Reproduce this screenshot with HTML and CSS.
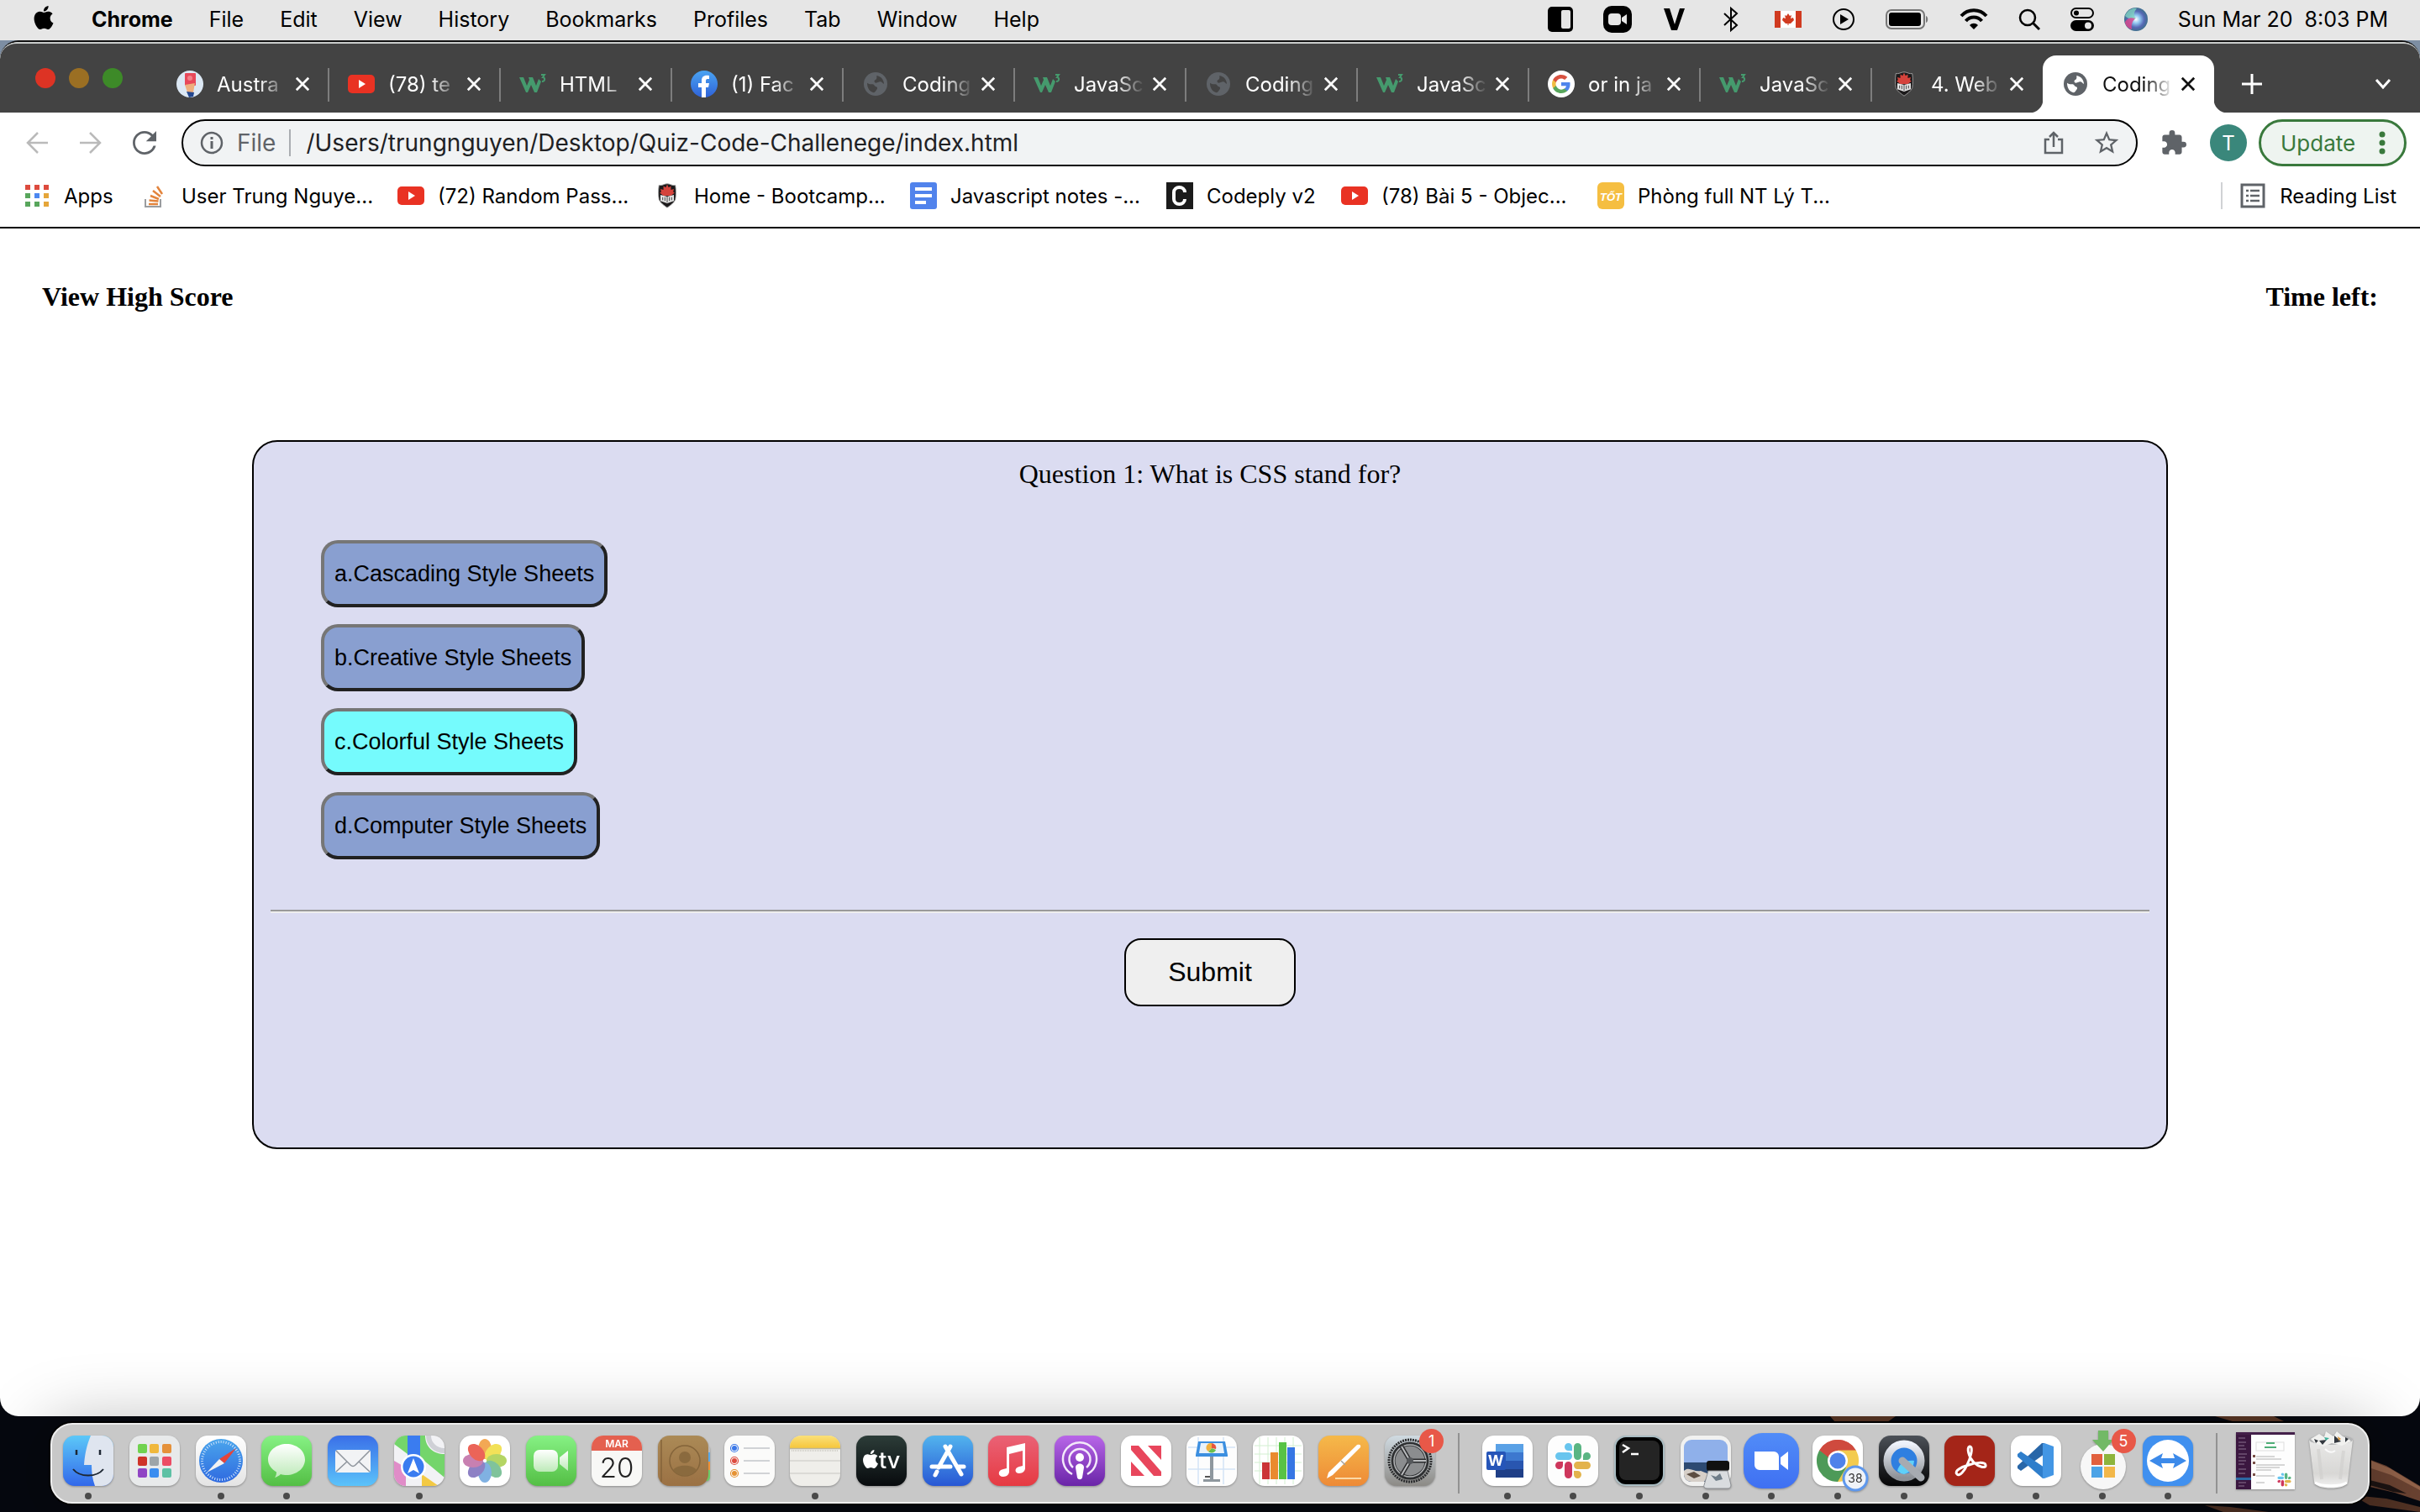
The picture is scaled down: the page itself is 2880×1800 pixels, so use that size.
FILE: index.html
```html
<!DOCTYPE html>
<html lang="en">
<head>
<meta charset="utf-8">
<title>Coding Quiz</title>
<link rel="stylesheet" href="styles.css">
</head>
<body>
<svg class="defs" aria-hidden="true">
  <defs>
    <linearGradient id="gBlue" x1="0" y1="0" x2="0" y2="1"><stop offset="0" stop-color="#3a6fe8"/><stop offset="1" stop-color="#5bc3fa"/></linearGradient>
    <linearGradient id="gFinder" x1="0" y1="0" x2="0" y2="1"><stop offset="0" stop-color="#5cc8f8"/><stop offset="1" stop-color="#3268ea"/></linearGradient>
    <linearGradient id="gSafari" x1="0" y1="0" x2="0" y2="1"><stop offset="0" stop-color="#4aa5ec"/><stop offset="1" stop-color="#2f6ae0"/></linearGradient>
    <linearGradient id="gGreen" x1="0" y1="0" x2="0" y2="1"><stop offset="0" stop-color="#86f184"/><stop offset="1" stop-color="#54bf45"/></linearGradient>
    <linearGradient id="gWhite" x1="0" y1="0" x2="0" y2="1"><stop offset="0" stop-color="#ffffff"/><stop offset="1" stop-color="#e4e4e4"/></linearGradient>
    <linearGradient id="gBubble" x1="0" y1="0" x2="0" y2="1"><stop offset="0" stop-color="#ffffff"/><stop offset="1" stop-color="#bdeab8"/></linearGradient>
    <linearGradient id="gTv" x1="0" y1="0" x2="0" y2="1"><stop offset="0" stop-color="#2c3c38"/><stop offset="1" stop-color="#080b0e"/></linearGradient>
    <linearGradient id="gStore" x1="0" y1="0" x2="0" y2="1"><stop offset="0" stop-color="#52b4ee"/><stop offset="1" stop-color="#2857d4"/></linearGradient>
    <linearGradient id="gMusic" x1="0" y1="0" x2="0" y2="1"><stop offset="0" stop-color="#ea6276"/><stop offset="1" stop-color="#e63a42"/></linearGradient>
    <linearGradient id="gPod" x1="0" y1="0" x2="0" y2="1"><stop offset="0" stop-color="#b866e8"/><stop offset="1" stop-color="#6a25a8"/></linearGradient>
    <linearGradient id="gPages" x1="0" y1="0" x2="0" y2="1"><stop offset="0" stop-color="#f5b94a"/><stop offset="1" stop-color="#ee8a36"/></linearGradient>
    <linearGradient id="gContacts" x1="0" y1="0" x2="0" y2="1"><stop offset="0" stop-color="#ab8a56"/><stop offset="1" stop-color="#9b7144"/></linearGradient>
    <linearGradient id="gYellow" x1="0" y1="0" x2="0" y2="1"><stop offset="0" stop-color="#fae07a"/><stop offset="1" stop-color="#f6c63a"/></linearGradient>
    <linearGradient id="gGear" x1="0" y1="0" x2="0" y2="1"><stop offset="0" stop-color="#d0dbe2"/><stop offset="1" stop-color="#8c8a86"/></linearGradient>
    <linearGradient id="gZoom" x1="0" y1="0" x2="0" y2="1"><stop offset="0" stop-color="#518cf8"/><stop offset="1" stop-color="#3f70f2"/></linearGradient>
    <linearGradient id="gQt" x1="0" y1="0" x2="0" y2="1"><stop offset="0" stop-color="#4c5158"/><stop offset="1" stop-color="#050506"/></linearGradient>
    <linearGradient id="gSilver" x1="0" y1="0" x2="0" y2="1"><stop offset="0" stop-color="#eef2fa"/><stop offset="1" stop-color="#8d9197"/></linearGradient>
    <linearGradient id="gFb" x1="0" y1="0" x2="0" y2="1"><stop offset="0" stop-color="#4aa4f2"/><stop offset="1" stop-color="#2f62d8"/></linearGradient>
    <linearGradient id="gBin" x1="0" y1="0" x2="0" y2="1"><stop offset="0" stop-color="#e9e9e8"/><stop offset=".7" stop-color="#d8d7d5"/><stop offset="1" stop-color="#f4f4f4"/></linearGradient>
    <radialGradient id="gSiri"><stop offset="0" stop-color="#ffffff"/><stop offset=".35" stop-color="#8fc5ef"/><stop offset=".7" stop-color="#5668b4"/><stop offset="1" stop-color="#3f6f8e"/></radialGradient>
    <clipPath id="tile"><rect width="60" height="60" rx="14"/></clipPath>
  </defs>
  <symbol id="close" viewBox="0 0 20 20"><path d="M2 2l16 16M18 2L2 18" stroke="currentColor" stroke-width="3" fill="none"/></symbol>
  <symbol id="youtube" viewBox="0 0 32 32"><rect y="5" width="32" height="22" rx="5" fill="#e93223"/><path d="M13 11l8 5-8 5z" fill="#fff"/></symbol>
  <symbol id="w3" viewBox="0 0 32 32"><path d="M0 8h5l4 10 3-7-1-3h5l4 10 3-8 3 3-5 13h-3l-4-9-4 9H8z" fill="#459a6d"/><path d="M26 5h4l-2 3c3 0 3 5-1 5" fill="none" stroke="#459a6d" stroke-width="2"/></symbol>
  <symbol id="globe" viewBox="0 0 24 24"><circle cx="12" cy="12" r="10.500" fill="#5f6368"/><path fill="var(--land)" d="M13 4.500c3.500.5 6.500 3.700 6.500 7.500-1.500-.5-1.500-2-3.500-2-1.500 0-2 1-3.500 1-1.200 0-2-1-1.500-2 .5-1 2-1 2-2.500zM4.500 11c2 1.500 3 1 5 1.200 1.500.2 1.500 2 3 2.300 1.200.2 1.500 1.500.5 2.500-1 1-1 2-2.500 2.600-3.500-.6-6-3.600-6-8.600z"/></symbol>
  <symbol id="crest" viewBox="0 0 28 36"><path d="M3 4c4 1 7-2 11-2s7 3 11 2c1 7 1 13 0 19-2 5-7 8-11 11-4-3-9-6-11-11C2 17 2 11 3 4z" fill="#1c1a1b" stroke="#a4a4a4" stroke-width="1"/><path d="M14 3l2 4 3-2v5l4-1-1 4 2 1-5 4H9l-5-4 2-1-1-4 4 1V5l3 2z" fill="#d5433c"/><path d="M5 17l9 2 9-2v8l-9 3-9-3z" fill="#e4e4e4"/><path d="M14 19v8M8 20v4M11 20v5M17 20v5M20 20v4" stroke="#333"/></symbol>
  <symbol id="google" viewBox="0 0 32 32"><circle cx="16" cy="16" r="16" fill="#fff"/><g transform="translate(4 4)"><path fill="#4f86ec" d="M22.560 12.250c0-.78-.07-1.530-.2-2.250H12v4.260h5.920c-.26 1.370-1.040 2.530-2.210 3.310v2.770h3.570c2.080-1.920 3.280-4.740 3.280-8.090z"/><path fill="#58a65c" d="M12 23c2.970 0 5.460-.98 7.280-2.660l-3.570-2.770c-.98.66-2.230 1.060-3.710 1.060-2.860 0-5.290-1.930-6.160-4.530H2.180v2.840C3.990 20.530 7.700 23 12 23z"/><path fill="#f1bd42" d="M5.840 14.090c-.22-.66-.35-1.360-.35-2.090s.13-1.430.35-2.090V7.070H2.180C1.430 8.550 1 10.220 1 12s.43 3.450 1.180 4.930l2.850-2.220.81-.62z"/><path fill="#d85140" d="M12 5.380c1.620 0 3.060.56 4.210 1.640l3.150-3.150C17.450 2.090 14.970 1 12 1 7.700 1 3.990 3.470 2.180 7.070l3.660 2.840c.87-2.600 3.300-4.530 6.160-4.530z"/></g></symbol>
  <symbol id="apple" viewBox="0 0 24 24"><path fill="currentColor" d="M12.152 6.896c-.948 0-2.415-1.078-3.960-1.040-2.040.027-3.910 1.183-4.961 3.014-2.117 3.675-.546 9.103 1.519 12.090 1.013 1.454 2.208 3.090 3.792 3.039 1.520-.065 2.090-.987 3.935-.987 1.831 0 2.350.987 3.960.948 1.637-.026 2.676-1.480 3.676-2.948 1.156-1.688 1.636-3.325 1.662-3.415-.039-.013-3.182-1.221-3.220-4.857-.026-3.040 2.480-4.494 2.597-4.559-1.429-2.090-3.623-2.324-4.390-2.376-2-.156-3.675 1.090-4.610 1.090zM15.530 3.830c.843-1.012 1.400-2.427 1.245-3.830-1.207.052-2.662.805-3.532 1.818-.78.896-1.454 2.338-1.273 3.714 1.338.104 2.715-.688 3.559-1.701"/></symbol>
  <symbol id="slack" viewBox="8 8 44 44"><path d="M9 24.500a4.500 4.500 0 0 1 4.500-4.500h11a4.500 4.500 0 0 1 0 9h-11A4.500 4.500 0 0 1 9 24.500zM29 18h-4.500A4.500 4.500 0 1 1 29 13.500z" fill="#68c5ee"/><path d="M35.500 9a4.500 4.500 0 0 1 4.500 4.500v11a4.500 4.500 0 0 1-9 0v-11A4.500 4.500 0 0 1 35.500 9zM42 29v-4.500a4.500 4.500 0 1 1 4.500 4.500z" fill="#5ab583"/><path d="M24.500 51a4.500 4.500 0 0 1-4.500-4.500v-11a4.500 4.500 0 0 1 9 0v11a4.500 4.500 0 0 1-4.500 4.500zM18 31v4.500A4.500 4.500 0 1 1 13.500 31z" fill="#ce375c"/><path d="M51 35.500a4.500 4.500 0 0 1-4.500 4.500h-11a4.500 4.500 0 0 1 0-9h11a4.500 4.500 0 0 1 4.500 4.500zM31 42h4.500a4.500 4.500 0 1 1-4.500 4.500z" fill="#e3b34c"/></symbol>
</svg>

<header class="menubar">
  <nav class="menus">
    <button class="menu" aria-label="Apple menu"><svg width="28" height="34" viewBox="0 0 28 34"><use href="#apple" width="28" height="34" y="-2"/></svg></button>
    <button class="menu menu-app">Chrome</button>
    <button class="menu">File</button>
    <button class="menu">Edit</button>
    <button class="menu">View</button>
    <button class="menu">History</button>
    <button class="menu">Bookmarks</button>
    <button class="menu">Profiles</button>
    <button class="menu">Tab</button>
    <button class="menu">Window</button>
    <button class="menu">Help</button>
  </nav>
  <div class="status">
    <svg width="30" height="30" viewBox="0 0 30 30"><rect width="30" height="30" rx="5"/><rect x="16" y="4" width="11" height="22" rx="2" fill="#e6e6e6"/></svg>
    <svg width="34" height="32" viewBox="0 0 34 32"><rect width="34" height="32" rx="10"/><rect x="6" y="9" width="15" height="14" rx="4" fill="#e6e6e6"/><path d="M22 14l6-4v12l-6-4z" fill="#e6e6e6"/></svg>
    <svg width="30" height="26" viewBox="0 0 30 26"><path d="M2 0h7l6 19 6-19h6l-9 26h-7z"/></svg>
    <svg width="32" height="28" viewBox="0 0 32 28"><path d="M8 7l15 14-7 6V1l7 6L8 21" fill="none" stroke="#000" stroke-width="2"/></svg>
    <svg width="32" height="20" viewBox="0 0 32 20"><rect width="32" height="20" fill="#fff"/><path d="M0 0h7v20H0zM25 0h7v20h-7zM16 3l2 3 2-1-1 4 3-1 1 3-4 4h-2.500v2h-1v-2H13l-4-4 1-3 3 1-1-4 2 1z" fill="#d03a20"/></svg>
    <svg width="28" height="28" viewBox="0 0 28 28"><circle cx="14" cy="14" r="12" fill="none" stroke="#000" stroke-width="2"/><path d="M10 8l10 6-10 6z"/></svg>
    <svg width="52" height="24" viewBox="0 0 52 24"><rect x="1" y="1" width="45" height="22" rx="6" fill="none" stroke="#777" stroke-width="2"/><rect x="4" y="4" width="38" height="16" rx="3"/><path d="M48 8c3 1 3 7 0 8z" fill="#777"/></svg>
    <svg width="34" height="26" viewBox="0 0 34 26"><path d="M2 9c8-9 22-9 30 0M7.500 15c5-6 14-6 19 0" fill="none" stroke="#000" stroke-width="4"/><path d="M17 25l-5-5c3-3 7-3 10 0z"/></svg>
    <svg width="26" height="26" viewBox="0 0 26 26"><circle cx="11" cy="11" r="9" fill="none" stroke="#000" stroke-width="2.500"/><path d="M17 17l8 8" stroke="#000" stroke-width="3"/></svg>
    <svg width="28" height="28" viewBox="0 0 28 28"><rect x="1" y="1" width="26" height="11" rx="5.500" fill="none" stroke="#000" stroke-width="2"/><circle cx="7" cy="6.500" r="3"/><rect y="15" width="28" height="13" rx="6.500"/><circle cx="21" cy="21.500" r="4" fill="#e6e6e6"/></svg>
    <svg width="28" height="28" viewBox="0 0 28 28"><circle cx="14" cy="14" r="14" fill="url(#gSiri)"/><path d="M1 10C4 2 12 0 15 1c-4 5-4 9-1 12-4 1-9 1-13-3z" fill="#7fd3c0" opacity=".8"/><path d="M1 17c4-6 8-5 12-4-3 3-5 7-4 13-4-1-8-5-8-9z" fill="#d8488e" opacity=".85"/></svg>
    <time>Sun Mar 20&nbsp; 8:03 PM</time>
  </div>
</header>

<main class="window">
  <div class="tabstrip">
    <div class="lights"><button class="light red" aria-label="Close window"></button><button class="light amber" aria-label="Minimise"></button><button class="light green" aria-label="Zoom"></button></div>
    <div class="tab"><svg class="fav" viewBox="0 0 32 32"><circle cx="16" cy="16" r="16" fill="#dce8f4"/><rect x="10" y="3" width="13" height="15" rx="1" fill="#e8485a"/><circle cx="16" cy="9" r="3" fill="#f2808a"/><path d="M10 17l12-2-2 11h-7z" fill="#eeaf7e"/><path d="M12 25l9 1-1 5-5 1z" fill="#23478f"/></svg><span class="title">Austra</span><button class="x" aria-label="Close tab"><svg><use href="#close"/></svg></button></div>
    <div class="tab"><svg class="fav"><use href="#youtube"/></svg><span class="title">(78) te</span><button class="x" aria-label="Close tab"><svg><use href="#close"/></svg></button></div>
    <div class="tab"><svg class="fav"><use href="#w3"/></svg><span class="title">HTML</span><button class="x" aria-label="Close tab"><svg><use href="#close"/></svg></button></div>
    <div class="tab"><svg class="fav" viewBox="0 0 32 32"><circle cx="16" cy="16" r="16" fill="url(#gFb)"/><path d="M13 32V20H9v-5h4v-3c0-5 3-7 9-6v4c-3-.3-4 .3-4 2v3h4l-1 5h-3v12z" fill="#fff"/></svg><span class="title">(1) Fac</span><button class="x" aria-label="Close tab"><svg><use href="#close"/></svg></button></div>
    <div class="tab"><svg class="fav"><use href="#globe"/></svg><span class="title">Coding</span><button class="x" aria-label="Close tab"><svg><use href="#close"/></svg></button></div>
    <div class="tab"><svg class="fav"><use href="#w3"/></svg><span class="title">JavaSc</span><button class="x" aria-label="Close tab"><svg><use href="#close"/></svg></button></div>
    <div class="tab"><svg class="fav"><use href="#globe"/></svg><span class="title">Coding</span><button class="x" aria-label="Close tab"><svg><use href="#close"/></svg></button></div>
    <div class="tab"><svg class="fav"><use href="#w3"/></svg><span class="title">JavaSc</span><button class="x" aria-label="Close tab"><svg><use href="#close"/></svg></button></div>
    <div class="tab"><svg class="fav"><use href="#google"/></svg><span class="title">or in ja</span><button class="x" aria-label="Close tab"><svg><use href="#close"/></svg></button></div>
    <div class="tab"><svg class="fav"><use href="#w3"/></svg><span class="title">JavaSc</span><button class="x" aria-label="Close tab"><svg><use href="#close"/></svg></button></div>
    <div class="tab last"><svg class="fav"><use href="#crest"/></svg><span class="title">4. Web</span><button class="x" aria-label="Close tab"><svg><use href="#close"/></svg></button></div>
    <div class="tab active"><svg class="fav"><use href="#globe"/></svg><span class="title">Coding</span><button class="x" aria-label="Close tab"><svg><use href="#close"/></svg></button></div>
    <button class="newtab" aria-label="New tab"><svg width="24" height="24" viewBox="0 0 24 24"><path d="M12 0v24M0 12h24" stroke="#fff" stroke-width="3"/></svg></button>
    <button class="more" aria-label="Search tabs"><svg width="20" height="12" viewBox="0 0 20 12"><path d="M2 1l8 9 8-9" fill="none" stroke="#fff" stroke-width="3"/></svg></button>
  </div>

  <div class="toolbar">
    <button class="tool" aria-label="Back"><svg width="28" height="28" viewBox="0 0 28 28"><path d="M27 14H3M15 2L3 14l12 12" fill="none" stroke="#bababa" stroke-width="2.500"/></svg></button>
    <button class="tool" aria-label="Forward"><svg width="28" height="28" viewBox="0 0 28 28"><path d="M1 14h24M13 2l12 12-12 12" fill="none" stroke="#bababa" stroke-width="2.500"/></svg></button>
    <button class="tool" aria-label="Reload"><svg width="28" height="28" viewBox="4 4 16 16"><path fill="#5f6368" d="M17.650 6.350A7.958 7.958 0 0 0 12 4c-4.420 0-7.990 3.580-7.990 8s3.570 8 7.990 8c3.730 0 6.840-2.550 7.730-6h-1.700A6.300 6.300 0 0 1 12 18.400c-3.500 0-6.400-2.800-6.400-6.400S8.500 5.600 12 5.600c1.800 0 3.300.7 4.500 1.900L13 11h7V4z"/></svg></button>
    <div class="omnibox">
      <svg width="28" height="28" viewBox="0 0 28 28"><circle cx="14" cy="14" r="12" fill="none" stroke="#5f6368" stroke-width="2.500"/><path d="M14 12v9M14 7v3" stroke="#5f6368" stroke-width="3"/></svg>
      <label class="scheme" for="url">File</label>
      <input id="url" class="url" value="/Users/trungnguyen/Desktop/Quiz-Code-Challenege/index.html">
      <button class="tool" aria-label="Share"><svg width="24" height="30" viewBox="0 0 24 30"><path d="M7 11H2v16h20V11h-5M12 20V3M7 8l5-5 5 5" fill="none" stroke="#5f6368" stroke-width="2.500"/></svg></button>
      <button class="tool" aria-label="Bookmark"><svg width="30" height="30" viewBox="1.500 1.500 21 21"><path fill="#5f6368" d="M22 9.240l-7.190-.62L12 2 9.190 8.630 2 9.240l5.460 4.730L5.820 21 12 17.270 18.180 21l-1.630-7.030L22 9.240zM12 15.400l-3.760 2.270 1-4.280-3.320-2.880 4.380-.38L12 6.100l1.710 4.040 4.380.38-3.320 2.880 1 4.280L12 15.400z"/></svg></button>
    </div>
    <button class="tool ext" aria-label="Extensions"><svg width="30" height="30" viewBox="1 1 22 22"><path fill="#5f6368" d="M20.500 11H19V7c0-1.100-.9-2-2-2h-4V3.500a2.500 2.500 0 0 0-5 0V5H4c-1.100 0-1.990.9-1.990 2v3.800H3.500c1.490 0 2.700 1.210 2.700 2.700s-1.210 2.700-2.700 2.700H2V20c0 1.100.9 2 2 2h3.800v-1.500c0-1.490 1.210-2.700 2.700-2.700 1.490 0 2.700 1.210 2.700 2.700V22H17c1.100 0 2-.9 2-2v-4h1.500a2.500 2.500 0 0 0 0-5z"/></svg></button>
    <button class="avatar">T</button>
    <button class="update">Update<svg width="8" height="28" viewBox="0 0 8 28"><g fill="#39793c"><circle cx="4" cy="4" r="3.500"/><circle cx="4" cy="14" r="3.500"/><circle cx="4" cy="24" r="3.500"/></g></svg></button>
  </div>

  <nav class="bookmarks">
    <a class="bm apps" href="#"><svg viewBox="0 0 32 32"><g fill="#dd4b3e"><path d="M2 3h6v6H2zM13 3h6v6h-6zM24 3h6v6h-6z"/></g><path d="M2 13h6v6H2zM2 23h6v6H2zM13 23h6v6h-6z" fill="#58a65c"/><path d="M13 13h6v6h-6z" fill="#4c88f0"/><path d="M24 13h6v6h-6zM24 23h6v6h-6z" fill="#e5a63a"/></svg>Apps</a>
    <a class="bm" href="#"><svg viewBox="0 0 32 32"><path d="M5 20v9h18v-9" fill="none" stroke="#9a9da0" stroke-width="2"/><path d="M9 26h11M9.500 21.500l11 1M11 16l10 4M14 10l9 7M19 5l6 9" stroke="#e3843c" stroke-width="2.500"/></svg>User Trung Nguye...</a>
    <a class="bm" href="#"><svg><use href="#youtube"/></svg>(72) Random Pass...</a>
    <a class="bm" href="#"><svg><use href="#crest"/></svg>Home - Bootcamp...</a>
    <a class="bm" href="#"><svg viewBox="0 0 32 32"><rect width="32" height="32" rx="3" fill="#5183ec"/><path d="M6 8h20M6 16h20M6 24h13" stroke="#fff" stroke-width="4"/></svg>Javascript notes -...</a>
    <a class="bm short" href="#"><svg viewBox="0 0 32 32"><rect width="32" height="32" fill="#1b1b1b"/><path d="M22 12c0-8-13-8-13 0v8c0 8 13 8 13 0" fill="none" stroke="#fff" stroke-width="4"/></svg>Codeply v2</a>
    <a class="bm" href="#"><svg><use href="#youtube"/></svg>(78) Bài 5 - Objec...</a>
    <a class="bm" href="#"><svg viewBox="0 0 32 32"><rect width="32" height="32" rx="6" fill="#f5be41"/><text x="16" y="22" class="tot">TỐT</text></svg>Phòng full NT Lý T...</a>
    <a class="bm reading" href="#"><svg viewBox="0 0 32 32"><rect x="3" y="3" width="26" height="26" fill="none" stroke="#5f6368" stroke-width="3"/><path d="M8 10h3M8 16h3M8 22h3M13 10h11M13 16h11M13 22h11" stroke="#5f6368" stroke-width="2.500"/></svg>Reading List</a>
  </nav>

  <section class="page">
    <div class="scorebar"><span>View High Score</span><span>Time left:</span></div>
    <div class="quiz">
      <p class="question">Question 1: What is CSS stand for?</p>
      <div class="answers">
        <button class="answer">a.Cascading Style Sheets</button>
        <button class="answer">b.Creative Style Sheets</button>
        <button class="answer chosen">c.Colorful Style Sheets</button>
        <button class="answer">d.Computer Style Sheets</button>
      </div>
      <hr>
      <button class="submit">Submit</button>
    </div>
  </section>
</main>

<footer class="desktop">
  <svg class="rocks" viewBox="0 0 2880 114" preserveAspectRatio="none" aria-hidden="true"><path d="M2178 0h78l-10 7h-62zM2636 0h70l14 7h-60z" fill="#5b3725"/><path d="M2816 50l24 9 40 24v18l-30-10-34-8z" fill="#6b4332"/><path d="M2822 53l22 9 36 22v4l-34-18-24-8z" fill="#94644b"/><path d="M2820 76l24 6 20 10-16-2-28-8z" fill="#1d1413"/><path d="M2624 106l30 2 46 6h-54zM2800 94l40 4 40 10v6l-60-8z" fill="#513224"/></svg>
  <nav class="dock">
    <button class="app open" aria-label="Finder"><svg viewBox="0 0 60 60"><g clip-path="url(#tile)"><rect width="60" height="60" fill="url(#gFinder)"/><path d="M33 0c-5 12-7 22-8 35h9c0 9 1 17 4 25h22V0z" fill="#dfe5ef"/></g><path d="M16 17v6M44 17v6" stroke="#1d2733" stroke-width="2.500"/><path d="M12 40c8 10 28 10 36 0" fill="none" stroke="#1d2733" stroke-width="2"/></svg></button>
    <button class="app" aria-label="Launchpad"><svg viewBox="0 0 60 60"><rect width="60" height="60" rx="14" fill="#e8eaeb"/><g><rect x="10" y="10" width="11" height="11" rx="2" fill="#70d24f"/><rect x="24" y="10" width="11" height="11" rx="2" fill="#f0b83c"/><rect x="39" y="10" width="11" height="11" rx="2" fill="#e5913a"/><rect x="10" y="25" width="11" height="11" rx="2" fill="#cf3328"/><rect x="24" y="25" width="11" height="11" rx="2" fill="#9da5a9"/><rect x="39" y="25" width="11" height="11" rx="2" fill="#ec4c64"/><rect x="10" y="39" width="11" height="11" rx="2" fill="#9045c4"/><rect x="24" y="39" width="11" height="11" rx="2" fill="#3a8df0"/><rect x="39" y="39" width="11" height="11" rx="2" fill="#5dc1a4"/></g></svg></button>
    <button class="app open" aria-label="Safari"><svg viewBox="0 0 60 60"><rect width="60" height="60" rx="14" fill="url(#gWhite)"/><circle cx="30" cy="30" r="26" fill="url(#gSafari)"/><circle cx="30" cy="30" r="22.500" fill="none" stroke="#cfe4fa" stroke-width="3" stroke-dasharray="1 2"/><path d="M48 15L34 33l-6-5z" fill="#e5443a"/><path d="M13 44l15-16 6 5z" fill="#f2f2f2"/></svg></button>
    <button class="app open" aria-label="Messages"><svg viewBox="0 0 60 60"><rect width="60" height="60" rx="14" fill="url(#gGreen)"/><path d="M30 10c12 0 22 8 22 18.500S42 47 30 47c-2.500 0-5-.4-7-1-2 2-5 3.500-7 4 1.500-2 2-4 2-6.500-6-3.500-10-9-10-15C8 18 18 10 30 10z" fill="url(#gBubble)"/></svg></button>
    <button class="app" aria-label="Mail"><svg viewBox="0 0 60 60"><rect width="60" height="60" rx="14" fill="url(#gBlue)"/><rect x="9" y="17" width="42" height="27" rx="3" fill="#f2f3f5"/><path d="M10 18l17 17c2 2 4 2 6 0l17-17M10 43l13-12M50 43L37 31" fill="none" stroke="#8d939b" stroke-width="1.500"/></svg></button>
    <button class="app open" aria-label="Maps"><svg viewBox="0 0 60 60"><g clip-path="url(#tile)"><rect width="60" height="60" fill="#f2f2f5"/><path d="M0 0h16v22L0 10zM31 0h6c0 14 10 22 23 22v28L31 26z" fill="#74d56b"/><path d="M0 30l14 8v22H0z" fill="#e08cc8"/><path d="M33 46l20 14H33z" fill="#f3c944"/><path d="M41 0c0 10 8 18 19 18" fill="none" stroke="#cfd0d6" stroke-width="6"/><path d="M16 0h15v30H16z" fill="#3a7cf0"/></g><circle cx="23" cy="37" r="15" fill="#fff"/><circle cx="23" cy="37" r="12.500" fill="#3a7cf0"/><path d="M23 27l7 18-7-4-7 4z" fill="#fff"/></svg></button>
    <button class="app" aria-label="Photos"><svg viewBox="0 0 60 60"><rect width="60" height="60" rx="14" fill="#fff"/><g opacity=".85"><ellipse cx="30" cy="16" rx="8" ry="12" fill="#f09a37"/><ellipse cx="30" cy="16" rx="8" ry="12" fill="#f0dc3c" transform="rotate(45 30 30)"/><ellipse cx="30" cy="16" rx="8" ry="12" fill="#a8ce4a" transform="rotate(90 30 30)"/><ellipse cx="30" cy="16" rx="8" ry="12" fill="#6ab98a" transform="rotate(135 30 30)"/><ellipse cx="30" cy="16" rx="8" ry="12" fill="#6ba4de" transform="rotate(180 30 30)"/><ellipse cx="30" cy="16" rx="8" ry="12" fill="#7a6cbc" transform="rotate(225 30 30)"/><ellipse cx="30" cy="16" rx="8" ry="12" fill="#bf6aa4" transform="rotate(270 30 30)"/><ellipse cx="30" cy="16" rx="8" ry="12" fill="#e8493c" transform="rotate(315 30 30)"/></g></svg></button>
    <button class="app" aria-label="FaceTime"><svg viewBox="0 0 60 60"><rect width="60" height="60" rx="14" fill="url(#gGreen)"/><rect x="9" y="17" width="29" height="26" rx="7" fill="url(#gBubble)"/><path d="M40 26l10-8v24l-10-8z" fill="url(#gBubble)"/></svg></button>
    <button class="app" aria-label="Calendar"><svg viewBox="0 0 60 60"><rect width="60" height="60" rx="14" fill="#f8f8f6"/><path d="M0 18v-4A14 14 0 0 1 14 0h32a14 14 0 0 1 14 14v4z" fill="#e4604f"/><text x="30" y="14" class="cal-month">MAR</text><text x="30" y="50" class="cal-day">20</text></svg></button>
    <button class="app" aria-label="Contacts"><svg viewBox="0 0 60 60"><path d="M50 12h8c2 0 4 2 4 4v4H50z" fill="#bbb"/><path d="M50 20h12v11H50z" fill="#59a9ea"/><path d="M50 31h12v10H50z" fill="#ef9136"/><path d="M50 41h12v8c0 3-2 5-4 5h-8z" fill="#6ccc66"/><rect width="60" height="60" rx="14" fill="url(#gContacts)"/><path d="M4 5v50" stroke="#84633a" stroke-width="1.500"/><g fill="#8a6a3e"><circle cx="32" cy="30" r="18" fill="none" stroke="#84643a" stroke-width="1.500"/><circle cx="32" cy="26" r="7"/><path d="M18 41c5-7 23-7 28 0-6 9-22 9-28 0z"/></g></svg></button>
    <button class="app" aria-label="Reminders"><svg viewBox="0 0 60 60"><rect width="60" height="60" rx="14" fill="#fbfbfa"/><path d="M23 15h31M23 30h31M23 45h31" stroke="#c4c6ca" stroke-width="1.500"/><g stroke-width="1.200" fill="none"><circle cx="12" cy="15" r="4.500" stroke="#3b78e8"/><circle cx="12" cy="30" r="4.500" stroke="#dd4c40"/><circle cx="12" cy="45" r="4.500" stroke="#e59233"/></g><circle cx="12" cy="15" r="3" fill="#3b78e8"/><circle cx="12" cy="30" r="3" fill="#dd4c40"/><circle cx="12" cy="45" r="3" fill="#e59233"/></svg></button>
    <button class="app open" aria-label="Notes"><svg viewBox="0 0 60 60"><g clip-path="url(#tile)"><rect width="60" height="60" fill="#efeeea"/><rect width="60" height="15" fill="url(#gYellow)"/></g><path d="M0 15.500h60" stroke="#bcb69c" stroke-width="1.500"/><path d="M2 18h56" stroke="#b5b2a8" stroke-width="1" stroke-dasharray="1 1"/><path d="M0 30h60M0 45h60" stroke="#d5d4cf" stroke-width="1.500"/></svg></button>
    <button class="app" aria-label="TV"><svg viewBox="0 0 60 60"><rect width="60" height="60" rx="14" fill="url(#gTv)"/><g color="#fff"><use href="#apple" x="6" y="17" width="22" height="22"/></g><text x="27" y="39" class="tv">tv</text></svg></button>
    <button class="app" aria-label="App Store"><svg viewBox="0 0 60 60"><rect width="60" height="60" rx="14" fill="url(#gStore)"/><path d="M33 13L19 38M27 13l19 33M11 37h22M42 37h7M17 43l-2 4" stroke="#fff" stroke-width="5" stroke-linecap="round"/></svg></button>
    <button class="app" aria-label="Music"><svg viewBox="0 0 60 60"><rect width="60" height="60" rx="14" fill="url(#gMusic)"/><path d="M22 14l22-5v30c0 3-3 6-7 6-6 0-6-7 0-8l4-1V18l-16 4v21c0 3-3 6-7 6-7 0-7-8 0-9l4-1z" fill="#fff"/></svg></button>
    <button class="app" aria-label="Podcasts"><svg viewBox="0 0 60 60"><rect width="60" height="60" rx="14" fill="url(#gPod)"/><g fill="none" stroke="#f3e8fa" stroke-width="2.500"><path d="M21 46a20 20 0 1 1 18 0"/><path d="M22 38a12.500 12.500 0 1 1 16 0"/></g><circle cx="30" cy="26" r="5" fill="#fff"/><path d="M25 38c0-6 10-6 10 0l-2 12c-1 3-5 3-6 0z" fill="#fff"/></svg></button>
    <button class="app" aria-label="News"><svg viewBox="0 0 60 60"><rect width="60" height="60" rx="14" fill="#fff"/><path d="M12 12h9l27 31v5h-9L12 17zM32 12h16v17zM12 31l16 17H12z" fill="#e8465c"/></svg></button>
    <button class="app" aria-label="Keynote"><svg viewBox="0 0 60 60"><rect width="60" height="60" rx="14" fill="#fdfdfd"/><path d="M2 14h56M2 40h56M14 2v56M44 2v56" stroke="#d4e4f6" stroke-width="1.500"/><path d="M28 24h4v28h8v3H20v-3h8z" fill="#8e979e"/><path d="M14 7h32l3 16v2H11v-2z" fill="#3c8fe0"/><path d="M17 9h26l2 12H15z" fill="#e9f2fa"/><path d="M30 15V9a5.500 5.500 0 0 1 5 7z" fill="#e5533d"/><path d="M30 15l5 2a5.500 5.500 0 0 1-9 2z" fill="#6ac04e"/><path d="M30 15l-4 4a5.500 5.500 0 0 1 4-10z" fill="#f0b03e"/><path d="M22 49h6" stroke="#555" stroke-width="2"/></svg></button>
    <button class="app" aria-label="Numbers"><svg viewBox="0 0 60 60"><rect width="60" height="60" rx="14" fill="#fff"/><path d="M2 12h56M2 22h56M2 32h56M2 42h56M8 2v56M18 2v56M28 2v56M38 2v56M48 2v56" stroke="#d2efd0"/><path d="M11 32h9v20h-9z" fill="#cb3437"/><path d="M21 20h9v32h-9z" fill="#ea8a2f"/><path d="M31 8h9v44h-9z" fill="#58c346"/><path d="M41 14h9v38h-9z" fill="#3676e4"/></svg></button>
    <button class="app" aria-label="Pages"><svg viewBox="0 0 60 60"><rect width="60" height="60" rx="14" fill="url(#gPages)"/><path d="M20 51h31" stroke="#fbd9a6" stroke-width="2"/><path d="M46 11c3-1 5 0 4 3L17 47l-7 4 2-7z" fill="#fff"/><path d="M27 30l5 5" stroke="#a5a29c" stroke-width="1.500"/></svg></button>
    <button class="app" aria-label="System Preferences"><svg viewBox="0 0 60 60"><rect width="60" height="60" rx="14" fill="url(#gGear)"/><circle cx="30" cy="30" r="25" fill="none" stroke="#2a2b2d" stroke-width="3" stroke-dasharray="2 1"/><circle cx="30" cy="30" r="20" fill="#8b8d8f" stroke="#2e3032" stroke-width="5"/><circle cx="30" cy="30" r="19" fill="none" stroke="#b4b6b8" stroke-width="1.500"/><path d="M30 30L20 13M30 30L20 47M30 30h19" stroke="#2b2c2e" stroke-width="5"/><path d="M30 30L20 13M30 30L20 47M30 30h19" stroke="#b9bbbd" stroke-width="2"/><circle cx="30" cy="30" r="4" fill="#55585b"/></svg><span class="badge">1</span></button>
    <span class="divider"></span>
    <button class="app open" aria-label="Word"><svg viewBox="0 0 60 60"><rect width="60" height="60" rx="14" fill="#fff"/><path d="M16 10h33v10H16z" fill="#5aa1e6"/><path d="M16 20h33v10H16z" fill="#3d78cf"/><path d="M16 30h33v10H16z" fill="#2956b0"/><path d="M16 40h33v10H16z" fill="#1f3f87"/><rect x="5" y="19" width="23" height="22" rx="2" fill="#2655b8"/><text x="16" y="36" class="word">W</text></svg></button>
    <button class="app open" aria-label="Slack"><svg viewBox="0 0 60 60"><rect width="60" height="60" rx="14" fill="#fdfdfd"/><use href="#slack" x="8" y="8" width="44" height="44"/></svg></button>
    <button class="app open" aria-label="Terminal"><svg viewBox="0 0 60 60"><rect x="1" y="1" width="58" height="58" rx="13" fill="#000" stroke="#a9bcc2" stroke-width="2"/><rect x="6" y="6" width="48" height="47" rx="8" fill="#242424"/><path d="M10 11l7 4-7 5M20 22h9" fill="none" stroke="#fff" stroke-width="2.500"/></svg></button>
    <button class="app open" aria-label="Preview"><svg viewBox="0 0 60 60"><rect width="60" height="60" rx="14" fill="#f1f1f0"/><rect x="4" y="5" width="52" height="50" rx="9" fill="#8fb0ea"/><path d="M4 32h52v14c0 5-4 9-9 9H13c-5 0-9-4-9-9z" fill="#2d4a72"/><path d="M4 42c6-6 12 2 20 0l10 4-6 9H13c-5 0-9-4-9-9z" fill="#d6cfc8"/><path d="M7 46l9-3 8 5-8 3z" fill="#5c4d42"/><rect x="31" y="30" width="27" height="12" rx="3" fill="#111"/><path d="M33 42h23l4 17c0 3-2 4-4 4H32c-3 0-5-2-4-4z" fill="#d9dcdf" stroke="#8c8f93"/><path d="M36 47l6 2 5-4 3 7-8 2z" fill="#6f7d89"/></svg></button>
    <button class="app open" aria-label="Zoom"><svg viewBox="0 0 60 60"><rect x="-3" y="-3" width="66" height="66" rx="22" fill="url(#gZoom)"/><path d="M10 19h23a6 6 0 0 1 6 6v16H16a6 6 0 0 1-6-6zM41 26l9-7v22l-9-7z" fill="#fff"/></svg></button>
    <button class="app open" aria-label="Chrome"><svg viewBox="0 0 60 60"><rect width="60" height="60" rx="14" fill="#fff"/><path d="M30 30L8.300 17.500A25 25 0 0 1 51.700 17.500z" fill="#cf4a3e"/><path d="M30 30V5l21.700 12.500A25 25 0 0 1 30 55z" fill="#f3cb4f"/><path d="M30 30l10 8-10 17A25 25 0 0 1 8.300 17.500z" fill="#4d9a58"/><path d="M30 5a25 25 0 0 1 21.700 12.500H30L19 26 8.300 17.500A25 25 0 0 1 30 5z" fill="#cf4a3e"/><circle cx="30" cy="30" r="12" fill="#fff"/><circle cx="30" cy="30" r="9.500" fill="#4e82ea"/><circle cx="51" cy="51" r="14" fill="#f0f3f8" stroke="#5f98ec" stroke-width="3"/><text x="51" y="56" class="count">38</text></svg></button>
    <button class="app open" aria-label="QuickTime Player"><svg viewBox="0 0 60 60"><rect width="60" height="60" rx="14" fill="url(#gQt)"/><circle cx="30" cy="30" r="20" fill="#2f7fe0" stroke="url(#gSilver)" stroke-width="9"/><path d="M30 46a16 16 0 0 1-8-4c2-8 8-13 20-12-1 9-5 14-12 16z" fill="#5fd0f8"/><path d="M28 30l22 20" stroke="#a7abb1" stroke-width="9" stroke-linecap="round"/></svg></button>
    <button class="app open" aria-label="Acrobat"><svg viewBox="0 0 60 60"><rect width="60" height="60" rx="14" fill="#a42518"/><path d="M15 46c-4-4 6-9 14-11 8-3 19-4 20 0 1 5-9 2-14-3-6-6-9-18-5-19 5 0 1 14-3 22-3 7-9 14-12 11z" fill="none" stroke="#fff" stroke-width="3"/></svg></button>
    <button class="app open" aria-label="Visual Studio Code"><svg viewBox="0 0 60 60"><rect width="60" height="60" rx="14" fill="#fff"/><path d="M40 9v13L12 42l-4-3v-3l29-27z" fill="#2866a8"/><path d="M40 51V38L12 19l-4 3v3l30 26z" fill="#2f7ecb"/><path d="M40 9l11 4v34l-11 4c-1 0-2 0-2-1V10z" fill="#4396e4"/></svg></button>
    <button class="app open" aria-label="AutoUpdate"><svg viewBox="0 0 60 60"><circle cx="31" cy="37" r="27" fill="#f7f7f7"/><path d="M17 22h13v13H17z" fill="#e2603d"/><path d="M32 22h13v13H32z" fill="#8db43c"/><path d="M17 37h13v13H17z" fill="#4ca3e6"/><path d="M32 37h13v13H32z" fill="#f2b749"/><path d="M25-6h12V5h6L31 19 18 5h7z" fill="#72b966"/></svg><span class="badge">5</span></button>
    <button class="app open" aria-label="TeamViewer"><svg viewBox="0 0 60 60"><rect width="60" height="60" rx="14" fill="#4090ef"/><circle cx="30" cy="30" r="25" fill="#fff"/><path d="M8 30l16-9-2 6h16l-2-6 16 9-16 9 2-6H22l2 6z" fill="#3c8aea"/></svg></button>
    <span class="divider"></span>
    <button class="app wide" aria-label="Slack window"><svg viewBox="0 0 70 68"><rect width="70" height="68" fill="#fdfdfd"/><path d="M0 0h18v68H0z" fill="#3b1740"/><path d="M0 0h70v3H0z" fill="#44204a"/><path d="M0 54h18v3H0z" fill="#2c68a4"/><path d="M3 7h8M3 12h9M3 16h7M3 20h9M3 26h10M3 30h8M3 34h9M3 38h7M3 44h9M3 49h8M3 60h9M3 64h7" stroke="#8b7490"/><rect x="24" y="12" width="33" height="10" fill="none" stroke="#ddd"/><path d="M36 13h10M34 18h14" stroke="#4fae78" stroke-width="2"/><path d="M24 29h22M24 32h30M24 39h34M24 42h28M24 45h18M24 52h22M24 60h10" stroke="#b0b0b0"/><path d="M20 27h3v3h-3zM20 35h3v3h-3zM20 49h3v3h-3z" fill="#7a5148"/><rect x="46" y="46" width="24" height="22" rx="5" fill="#fff"/><use href="#slack" x="49" y="48" width="17" height="17"/></svg></button>
    <button class="app wide" aria-label="Bin"><svg viewBox="0 0 70 68"><path d="M9 9h52l-6 50c-1 10-39 10-40 0z" fill="url(#gBin)"/><path d="M20 20l4 36M50 22l-4 34" stroke="#d0cfcd" stroke-width="4" opacity=".6"/><path d="M16 60c8 5 30 5 38 0" fill="none" stroke="#fff" stroke-width="3"/><ellipse cx="35" cy="9" rx="26" ry="6" fill="#b4b5b6"/><path d="M11 8l10-6 6 4 2-7 9 6 4-6 7 6 7 3 3 3-11 5-12-3-10 4-10-4z" fill="#f1f1ef"/><path d="M15 8l5 2-3 3zM21 10l9-1-5 6zM39 4l8 7-8 2zM52 6l4 2-4 4z" fill="#33383f"/><path d="M27 6l6 1-4 3z" fill="#3fae9a"/><path d="M43 5l4 3-3 2z" fill="#d9963c"/><path d="M28 20c4 4 8 5 12 2" fill="none" stroke="#fafafa" stroke-width="2"/></svg></button>
  </nav>
</footer>
</body>
</html>
```
FILE: styles.css
```css
* { box-sizing: border-box; }

body {
  margin: 0;
  min-height: 100vh;
  display: flex;
  flex-direction: column;
  background: linear-gradient(#7d8ea3, #7d8ea3 200px, #06080f 400px);
  font-family: Inter, "Liberation Sans", sans-serif;
  font-size: 24px;
  color: #000;
}

button {
  margin: 0;
  padding: 0;
  border: 0;
  background: none;
  font: inherit;
  color: inherit;
}

svg { display: block; flex: none; overflow: visible; }
.defs { position: absolute; width: 0; height: 0; overflow: hidden; }

/* Menu bar */
.menubar {
  height: 48px;
  padding: 0 38px 2px 38px;
  display: flex;
  align-items: center;
  justify-content: space-between;
  background: #e6e6e6;
  font-size: 25px;
}
.menus { display: flex; align-items: center; gap: 43px; }
.menu-app { font-weight: 700; }
.status { display: flex; align-items: center; gap: 36px; }
.status time { white-space: nowrap; }

/* Browser window */
.window {
  flex: 1;
  display: flex;
  flex-direction: column;
  overflow: hidden;
  border-top: 2px solid #111;
  border-radius: 22px;
  background: #fff;
}
.tabstrip {
  height: 84px;
  padding-left: 42px;
  display: flex;
  align-items: flex-end;
  border-top: 2px solid #c9cccb;
  border-radius: 20px 20px 0 0;
  background: #434343;
  color: #fff;
}
.lights { display: flex; gap: 16px; width: 145px; padding-bottom: 29px; }
.light { width: 24px; height: 24px; border-radius: 12px; }
.red { background: #dd3324; }
.amber { background: #9b6f23; }
.green { background: #3d8a28; }
.tab {
  --land: #434343;
  position: relative;
  width: 204px;
  height: 68px;
  padding-left: 23px;
  display: flex;
  align-items: center;
}
.tab::after {
  content: "";
  position: absolute;
  right: -1px;
  top: 15px;
  width: 2px;
  height: 40px;
  background: #7d7d7d;
}
.last::after, .active::after { display: none; }
.fav { width: 32px; height: 32px; margin-right: 16px; }
.title {
  width: 84px;
  white-space: nowrap;
  -webkit-mask-image: linear-gradient(90deg, #000 60%, transparent);
  mask-image: linear-gradient(90deg, #000 60%, transparent);
}
.x { margin-left: 9px; }
.x svg { width: 18px; height: 18px; }
.active {
  --land: #fff;
  border-radius: 16px 16px 0 0;
  background: #fff;
  color: #111;
}
.active::before {
  content: "";
  position: absolute;
  left: -16px;
  right: -16px;
  bottom: 0;
  height: 16px;
  background:
    radial-gradient(circle at 0 0, transparent 16px, #fff 17px) left / 16px 16px no-repeat,
    radial-gradient(circle at 100% 0, transparent 16px, #fff 17px) right / 16px 16px no-repeat;
}
.newtab { margin: 0 auto 22px 33px; }
.more { margin: 0 34px 28px 0; }

.toolbar {
  padding: 8px 16px 8px 30px;
  display: flex;
  align-items: center;
  gap: 36px;
}
.omnibox {
  flex: 1;
  height: 56px;
  margin-left: -6px;
  padding: 0 20px;
  display: flex;
  align-items: center;
  border: 2px solid #000;
  border-radius: 28px;
  background: #f1f3f4;
}
.scheme {
  margin-left: 16px;
  padding-right: 16px;
  border-right: 2px solid #aaadb1;
  font-size: 28px;
  line-height: 32px;
  color: #5f6368;
}
.url {
  flex: 1;
  padding: 0 0 0 18px;
  border: 0;
  outline: 0;
  background: none;
  font: 28px/32px Inter, "Liberation Sans", sans-serif;
  color: #202124;
}
.omnibox .tool + .tool { margin-left: 36px; }
.ext { margin-left: -8px; }
.avatar {
  width: 44px;
  height: 44px;
  margin-left: -8px;
  border-radius: 22px;
  background: #3a877b;
  color: #fff;
}
.update {
  width: 176px;
  height: 56px;
  margin-left: -22px;
  padding: 0 22px 0 23px;
  display: flex;
  align-items: center;
  justify-content: space-between;
  border: 3px solid #39793c;
  border-radius: 28px;
  background: #eef4f0;
  color: #39793c;
  font-size: 26px;
}

.bookmarks {
  height: 66px;
  padding: 0 28px 10px;
  display: flex;
  align-items: center;
  border-bottom: 2px solid #000;
}
.bm {
  width: 305px;
  display: flex;
  align-items: center;
  gap: 16px;
  color: #000;
  text-decoration: none;
  white-space: nowrap;
}
.bm svg { width: 32px; height: 32px; }
.apps { width: 140px; }
.short { width: 208px; }
.reading {
  width: auto;
  margin-left: auto;
  padding-left: 20px;
  border-left: 2px solid #d0d2d5;
}
.tot { font: italic 700 13px "Liberation Sans", sans-serif; fill: #fff; text-anchor: middle; }

/* Quiz page */
.page {
  padding: 63px 50px 60px;
  font-family: "Liberation Serif", serif;
  font-size: 32px;
  line-height: 36px;
}
.scorebar { display: flex; justify-content: space-between; font-weight: 700; }
.quiz {
  min-height: 844px;
  margin: 153px 250px 0;
  padding: 20px;
  border: 2px solid #000;
  border-radius: 30px;
  background: #dbdcf1;
}
.question { margin: 0; text-align: center; }
.answers {
  margin: 61px 0 60px 60px;
  display: flex;
  flex-direction: column;
  align-items: flex-start;
  gap: 20px;
}
.answer {
  height: 80px;
  padding: 0 12px;
  border: 4px solid;
  border-color: #767676 #212121 #212121 #767676;
  border-radius: 20px;
  background: #899fd0;
  font: 27px/32px "Liberation Sans", sans-serif;
}
.chosen { background: #75fbfd; }
.quiz hr {
  margin: 0;
  height: 4px;
  border: 0;
  border-top: 2px solid #9a9a9a;
  border-bottom: 2px solid #eee;
}
.submit {
  display: block;
  width: 204px;
  height: 81px;
  margin: 30px auto 0;
  padding-bottom: 2px;
  border: 2px solid #000;
  border-radius: 20px;
  background: #efefef;
  font: 32px/36px "Liberation Sans", sans-serif;
}

/* Dock */
.desktop { position: relative; height: 114px; padding: 8px 60px; }
.rocks { position: absolute; inset: 0; width: 100%; height: 100%; }
.dock {
  position: relative;
  height: 96px;
  padding: 0 4px;
  display: flex;
  align-items: center;
  border: 2px solid #eee;
  border-radius: 26px;
  background: #c8c8c8;
  box-shadow: 0 0 0 2px #000, 0 10px 80px 10px rgba(0, 0, 0, .28);
}
.app {
  position: relative;
  flex: 1;
  display: flex;
  justify-content: center;
  padding-bottom: 6px;
}
.app svg { width: 60px; height: 60px; filter: drop-shadow(0 1px 1px rgba(0, 0, 0, .3)); }
.wide svg { width: 70px; height: 68px; }
.open::after {
  content: "";
  position: absolute;
  left: calc(50% - 4px);
  bottom: -10px;
  width: 8px;
  height: 8px;
  border-radius: 4px;
  background: #4a4a4a;
}
.badge {
  position: absolute;
  left: calc(50% + 11px);
  top: -8px;
  width: 29px;
  height: 29px;
  border-radius: 15px;
  background: #e85848;
  color: #fff;
  font-size: 18px;
  line-height: 29px;
  text-align: center;
}
.divider { width: 37px; height: 72px; background: linear-gradient(#929292, #929292) center / 2px 100% no-repeat; }
.cal-month, .cal-day, .word, .count { font-family: Inter, sans-serif; text-anchor: middle; }
.cal-month { font-size: 12px; font-weight: 600; fill: #fff; }
.cal-day { font-size: 33px; font-weight: 300; fill: #222; }
.word { font-size: 18px; font-weight: 700; fill: #fff; }
.count { font-size: 14px; fill: #333; }
.tv { font: 500 27px Inter, sans-serif; fill: #fff; }
```
